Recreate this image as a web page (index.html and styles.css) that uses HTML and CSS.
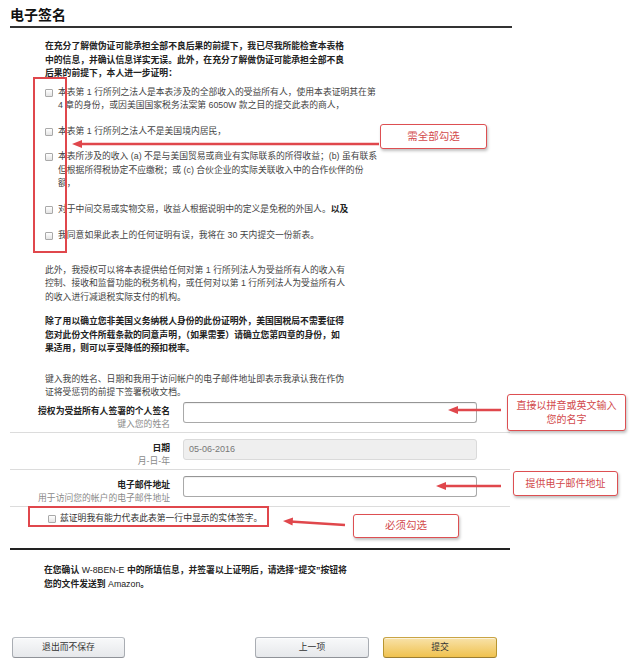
FILE: index.html
```html
<!DOCTYPE html>
<html lang="zh-CN">
<head>
<meta charset="utf-8">
<title>电子签名</title>
<link rel="stylesheet" href="styles.css">
</head>
<body>
<div class="page">
  <div class="main">
    <h1 class="title">电子签名</h1>
    <div class="body">
      <p class="intro">在充分了解做伪证可能承担全部不良后果的前提下，我已尽我所能检查本表格<br>中的信息，并确认信息详实无误。此外，在充分了解做伪证可能承担全部不良<br>后果的前提下，本人进一步证明：</p>
      <div class="checks">
        <div class="check"><span class="cb"></span><span class="ctext">本表第 1 行所列之法人是本表涉及的全部收入的受益所有人，使用本表证明其在第<br>4 章的身份，或因美国国家税务法案第 6050W 款之目的提交此表的商人，</span></div>
        <div class="check"><span class="cb"></span><span class="ctext">本表第 1 行所列之法人不是美国境内居民，</span></div>
        <div class="check"><span class="cb"></span><span class="ctext">本表所涉及的收入 (a) 不是与美国贸易或商业有实际联系的所得收益；(b) 虽有联系<br>但根据所得税协定不应缴税；或 (c) 合伙企业的实际关联收入中的合作伙伴的份<br>额，</span></div>
        <div class="check"><span class="cb"></span><span class="ctext">对于中间交易或实物交易，收益人根据说明中的定义是免税的外国人。<b>以及</b></span></div>
        <div class="check"><span class="cb"></span><span class="ctext">我同意如果此表上的任何证明有误，我将在 30 天内提交一份新表。</span></div>
      </div>
      <p class="para p2">此外，我授权可以将本表提供给任何对第 1 行所列法人为受益所有人的收入有<br>控制、接收和监督功能的税务机构，或任何对以第 1 行所列法人为受益所有人<br>的收入进行减退税实际支付的机构。</p>
      <p class="para p3 strong">除了用以确立您非美国义务纳税人身份的此份证明外，美国国税局不需要征得<br>您对此份文件所载条款的同意声明，（如果需要）请确立您第四章的身份，如<br>果适用，则可以享受降低的预扣税率。</p>
      <p class="para p4">键入我的姓名、日期和我用于访问帐户的电子邮件地址即表示我承认我在作伪<br>证将受惩罚的前提下签署税收文档。</p>
    </div>

    <div class="form">
      <div class="row first">
        <div class="label"><b>授权为受益所有人签署的个人签名</b><span class="sub">键入您的姓名</span></div>
        <div class="field"></div>
      </div>
      <div class="row">
        <div class="label"><b>日期</b><span class="sub">月-日-年</span></div>
        <div class="field disabled">05-06-2016</div>
      </div>
      <div class="row">
        <div class="label"><b>电子邮件地址</b><span class="sub">用于访问您的帐户的电子邮件地址</span></div>
        <div class="field"></div>
      </div>
    </div>

    <div class="confirm"><span class="cb"></span><span class="ctext">兹证明我有能力代表此表第一行中显示的实体签字。</span></div>
    <div class="rule"></div>
    <p class="final">在您确认 <span class="latin">W-8BEN-E</span> 中的所填信息，并签署以上证明后，请选择“提交”按钮将<br>您的文件发送到 <span class="latin">Amazon</span>。</p>

    <div class="buttons">
      <div class="btn">退出而不保存</div>
      <div class="btn prev">上一项</div>
      <div class="btn primary">提交</div>
    </div>
  </div>

  <div class="mark mark-checks"></div>
  <div class="mark mark-confirm"></div>
  <svg class="arrows" width="640" height="660" viewBox="0 0 640 660">
    <g stroke="#e0474c" stroke-width="2.4" fill="none">
      <line x1="379" y1="144" x2="80" y2="144"/>
      <line x1="501" y1="410" x2="456" y2="410"/>
      <line x1="501" y1="486" x2="444" y2="486"/>
      <line x1="345" y1="525" x2="290" y2="521.5"/>
    </g>
    <g fill="#e0474c">
      <polygon points="72,144 82,140 82,148"/>
      <polygon points="448,410 458,406 458,414"/>
      <polygon points="436,486 446,482 446,490"/>
      <polygon points="283,521 293,517.5 292.5,525.5"/>
    </g>
  </svg>
  <div class="note note1">需全部勾选</div>
  <div class="note note2">直接以拼音或英文输入<br>您的名字</div>
  <div class="note note3">提供电子邮件地址</div>
  <div class="note note4">必须勾选</div>
</div>
</body>
</html>
```
FILE: styles.css
```css
html, body {
  margin: 0;
  padding: 0;
  background: #fff;
}
body {
  font-family: "Liberation Sans", "Noto Sans CJK SC", sans-serif;
  font-size: 8.8px;
  color: #444;
}
.page {
  position: relative;
  width: 640px;
  height: 660px;
  overflow: hidden;
}
.main {
  margin-left: 10px;
  width: 500px;
}
.title {
  margin: 0;
  width: 502px;
  padding-top: 6px;
  height: 20px;
  font-size: 14px;
  line-height: 18px;
  font-weight: bold;
  color: #111;
  border-bottom: 2px solid #333;
}
.body {
  padding-left: 35px;
}
.intro {
  margin: 12px 0 0;
  line-height: 13.5px;
  font-weight: bold;
  color: #222;
  white-space: nowrap;
}
.checks {
  margin-top: 5px;
}
.check {
  display: flex;
  line-height: 13.5px;
  margin-bottom: 12px;
  white-space: nowrap;
}
.check:nth-child(4) {
  margin-bottom: 13px;
}
.check b {
  color: #222;
}
.cb {
  flex-shrink: 0;
  width: 8px;
  height: 8px;
  box-sizing: border-box;
  margin-top: 3px;
  margin-right: 5px;
  border: 1px solid #a9a9a9;
  border-radius: 1px;
  background: linear-gradient(#ffffff, #e4e4e4);
}
.para {
  margin: 0;
  line-height: 13.5px;
  white-space: nowrap;
}
.p2 { margin-top: 21px; }
.p3 { margin-top: 11px; }
.p4 { margin-top: 17px; }
.strong {
  font-weight: bold;
  color: #222;
}

.form {
  width: 500px;
}
.row {
  display: grid;
  grid-template-columns: 160px 294px;
  column-gap: 13px;
  align-items: start;
  padding-top: 6px;
  border-bottom: 1px solid #dcdcdc;
}
.row.first {
  padding-top: 2px;
}
.label {
  display: flex;
  flex-direction: column;
  align-items: flex-end;
  padding-top: 3px;
  line-height: 13.5px;
  white-space: nowrap;
}
.label b {
  color: #222;
}
.label .sub {
  color: #8a8a8a;
}
.field {
  height: 21px;
  box-sizing: border-box;
  border: 1px solid #a9a9a9;
  border-top-color: #959595;
  border-radius: 3px;
  background: #fff;
  box-shadow: inset 0 1px 1px rgba(0, 0, 0, 0.06);
}
.field.disabled {
  background: #efefef;
  border-color: #dadada;
  box-shadow: none;
  color: #777;
  padding-left: 5px;
  line-height: 19px;
  font-size: 9px;
}

.confirm {
  display: flex;
  padding: 5px 0 0 38px;
  line-height: 13.5px;
  white-space: nowrap;
  color: #333;
}
.confirm .cb {
  margin-right: 4px;
}
.rule {
  margin-top: 23px;
  border-top: 2px solid #222;
}
.final {
  margin: 13px 0 0;
  padding-left: 34px;
  line-height: 14px;
  font-weight: bold;
  color: #222;
  white-space: nowrap;
}
.final .latin {
  font-weight: normal;
}
.buttons {
  display: flex;
  gap: 14px;
  margin-top: 46px;
  padding-left: 2px;
  padding-right: 13px;
}
.btn {
  width: 113px;
  height: 21px;
  box-sizing: border-box;
  border: 1px solid #adb1b8;
  border-color: #b7bbc1 #a9adb3 #8f9298;
  border-radius: 3px;
  background: linear-gradient(#f8f9fa, #e6e8eb);
  box-shadow: 0 1px 0 rgba(255, 255, 255, 0.6) inset;
  color: #333;
  text-align: center;
  line-height: 19px;
}
.btn.prev {
  margin-left: auto;
  width: 114px;
}
.btn.primary {
  width: 114px;
  background: linear-gradient(#f8e2a9, #f0c24f);
  border-color: #c9a445 #b8952f #9c7e31;
}

/* annotation overlays */
.mark {
  position: absolute;
  box-sizing: border-box;
  border: 2px solid #e0474c;
}
.mark-checks {
  left: 33px;
  top: 77px;
  width: 34px;
  height: 176px;
}
.mark-confirm {
  left: 28px;
  top: 506px;
  width: 241px;
  height: 21px;
}
.arrows {
  position: absolute;
  left: 0;
  top: 0;
  pointer-events: none;
}
.note {
  position: absolute;
  box-sizing: border-box;
  display: flex;
  align-items: center;
  justify-content: center;
  text-align: center;
  background: #fff;
  border: 1.5px solid #dd4f52;
  border-radius: 3px;
  box-shadow: 1px 2px 3px rgba(0, 0, 0, 0.25);
  color: #d24a4c;
  font-size: 10.5px;
  line-height: 13.5px;
  white-space: nowrap;
}
.note1 { left: 380px; top: 124px; width: 107px; height: 25px; }
.note2 { left: 507px; top: 394px; width: 119px; height: 37px; font-size: 10px; }
.note3 { left: 513px; top: 471px; width: 105px; height: 25px; font-size: 10px; }
.note4 { left: 353px; top: 514px; width: 106px; height: 24px; }
```
